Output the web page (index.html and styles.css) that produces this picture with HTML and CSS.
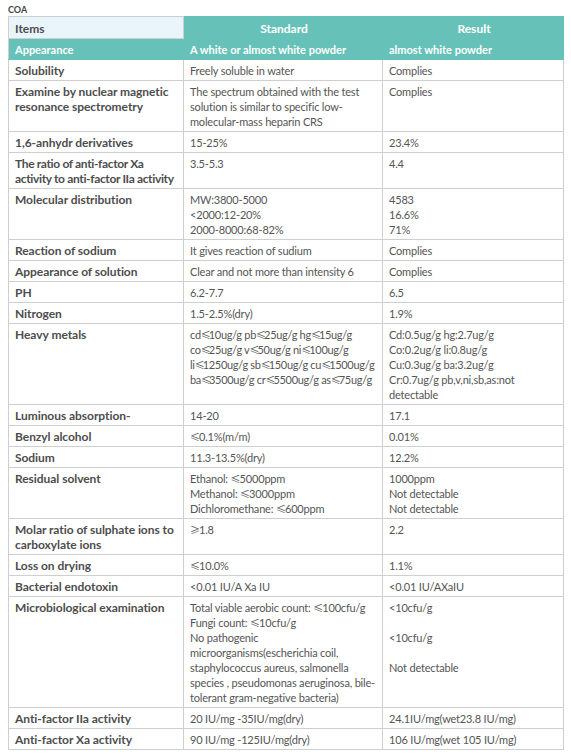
FILE: index.html
```html
<!DOCTYPE html>
<html>
<head>
<meta charset="utf-8">
<link rel="stylesheet" href="styles.css">
</head>
<body>
<div class="title">COA</div>
<table class="coa">
<colgroup><col class="c1"><col class="c2"><col class="c3"></colgroup>
<thead>
<tr><th class="items">Items</th><th class="hd">Standard</th><th class="hd">Result</th></tr>
</thead>
<tbody>
<tr class="teal"><td>Appearance</td><td>A white or almost white powder</td><td>almost white powder</td></tr>
<tr><td>Solubility</td><td>Freely soluble in water</td><td>Complies</td></tr>
<tr><td>Examine by nuclear magnetic resonance spectrometry</td><td>The spectrum obtained with the test solution is similar to specific low-molecular-mass heparin CRS</td><td>Complies</td></tr>
<tr><td>1,6-anhydr derivatives</td><td>15-25%</td><td>23.4%</td></tr>
<tr><td class="squeeze">The ratio of anti-factor Xa activity to anti-factor IIa activity</td><td>3.5-5.3</td><td>4.4</td></tr>
<tr><td>Molecular distribution</td><td>MW:3800-5000<br>&lt;2000:12-20%<br>2000-8000:68-82%</td><td>4583<br>16.6%<br>71%</td></tr>
<tr><td>Reaction of sodium</td><td>It gives reaction of sudium</td><td>Complies</td></tr>
<tr><td>Appearance of solution</td><td>Clear and not more than intensity 6</td><td>Complies</td></tr>
<tr><td>PH</td><td>6.2-7.7</td><td>6.5</td></tr>
<tr><td>Nitrogen</td><td>1.5-2.5%(dry)</td><td>1.9%</td></tr>
<tr><td>Heavy metals</td><td class="nw">cd<span class="le">≤</span>10ug/g pb<span class="le">≤</span>25ug/g hg<span class="le">≤</span>15ug/g<br>co<span class="le">≤</span>25ug/g v<span class="le">≤</span>50ug/g ni<span class="le">≤</span>100ug/g<br>li<span class="le">≤</span>1250ug/g sb<span class="le">≤</span>150ug/g cu<span class="le">≤</span>1500ug/g<br>ba<span class="le">≤</span>3500ug/g cr<span class="le">≤</span>5500ug/g as<span class="le">≤</span>75ug/g</td><td>Cd:0.5ug/g hg:2.7ug/g<br>Co:0.2ug/g li:0.8ug/g<br>Cu:0.3ug/g ba:3.2ug/g<br>Cr:0.7ug/g pb,v,ni,sb,as:not detectable</td></tr>
<tr><td>Luminous absorption-</td><td>14-20</td><td>17.1</td></tr>
<tr><td>Benzyl alcohol</td><td><span class="le">≤</span>0.1%(m/m)</td><td>0.01%</td></tr>
<tr><td>Sodium</td><td>11.3-13.5%(dry)</td><td>12.2%</td></tr>
<tr><td>Residual solvent</td><td>Ethanol: <span class="le">≤</span>5000ppm<br>Methanol: <span class="le">≤</span>3000ppm<br>Dichloromethane: <span class="le">≤</span>600ppm</td><td>1000ppm<br>Not detectable<br>Not detectable</td></tr>
<tr><td>Molar ratio of sulphate ions to carboxylate ions</td><td><span class="le">≥</span>1.8</td><td>2.2</td></tr>
<tr><td>Loss on drying</td><td><span class="le">≤</span>10.0%</td><td>1.1%</td></tr>
<tr><td>Bacterial endotoxin</td><td>&lt;0.01 IU/A Xa IU</td><td>&lt;0.01 IU/AXaIU</td></tr>
<tr><td>Microbiological examination</td><td>Total viable aerobic count: <span class="le">≤</span>100cfu/g<br>Fungi count: <span class="le">≤</span>10cfu/g<br>No pathogenic microorganisms(escherichia coil, staphylococcus aureus, salmonella species , pseudomonas aeruginosa, bile-tolerant gram-negative bacteria)</td><td>&lt;10cfu/g<br><br>&lt;10cfu/g<br><br>Not detectable</td></tr>
<tr><td>Anti-factor IIa activity</td><td>20 IU/mg -35IU/mg(dry)</td><td>24.1IU/mg(wet23.8 IU/mg)</td></tr>
<tr><td>Anti-factor Xa activity</td><td>90 IU/mg -125IU/mg(dry)</td><td>106 IU/mg(wet 105 IU/mg)</td></tr>
</tbody>
</table>
</body>
</html>
```
FILE: styles.css
```css
html, body {
  margin: 0;
  padding: 0;
  background: #ffffff;
}
body {
  padding: 4px 8px 0 8px;
  font-family: Lato, "Noto Sans", sans-serif;
  color: #555555;
}
.title {
  font-size: 9px;
  font-weight: 700;
  color: #444444;
  line-height: 12px;
}
.coa {
  border-collapse: collapse;
  width: 555px;
  table-layout: fixed;
  font-size: 11px;
  letter-spacing: -0.18px;
  line-height: 15px;
}
.c1 { width: 175px; }
.c2 { width: 199px; }
.c3 { width: 181px; }
.coa th, .coa td {
  border: 1px solid #cfcfcf;
  padding: 3px 4px 2px 6px;
  vertical-align: top;
  text-align: left;
}
.coa td:first-child {
  font-size: 12px;
  letter-spacing: -0.05px;
  font-weight: 700;
  color: #4d4d4d;
  padding-right: 2px;
}
.coa td.squeeze {
  letter-spacing: -0.35px;
}
.coa th {
  font-size: 12px;
  letter-spacing: 0;
  font-weight: 700;
  padding-top: 4px;
}
.coa th.items {
  background: #eaf5fb;
  color: #4d4d4d;
}
.coa th.hd {
  background: #66c2b8;
  color: #ffffff;
  text-align: center;
  border-color: #66c2b8;
}
.coa tr.teal td {
  background: #66c2b8;
  color: #ffffff;
  font-weight: 700;
  font-size: 11px;
  letter-spacing: 0;
  border-color: #66c2b8;
}
.coa tr.teal td:first-child {
  border-left-color: #cfcfcf;
}
.le {
  font-family: "Noto Sans CJK SC", sans-serif;
  font-size: 10px;
  letter-spacing: -2px;
  line-height: 0;
  margin-right: 1px;
}
.nw {
  white-space: nowrap;
  letter-spacing: -0.3px;
}
.nw .le {
  margin-right: 0;
}
```
